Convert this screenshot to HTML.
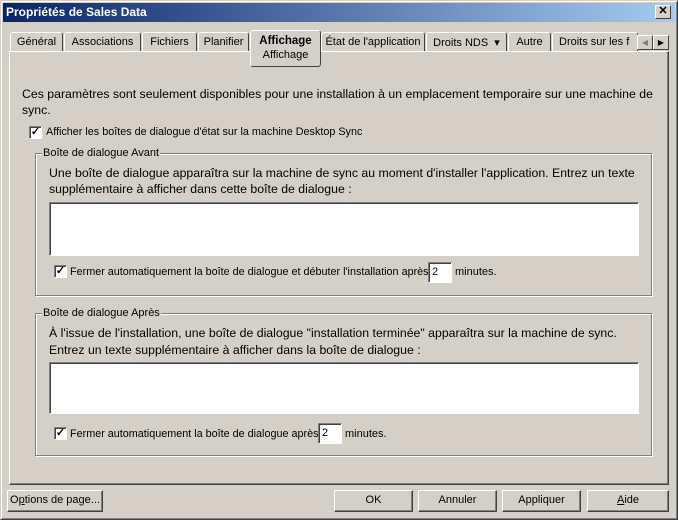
<!DOCTYPE html><html><head><style>
*{box-sizing:border-box;margin:0;padding:0}
body{width:678px;height:520px;background:#d4d0c8;font:11px "Liberation Sans",sans-serif;color:#000;position:relative;overflow:hidden}
.a{position:absolute;white-space:nowrap}
.p{font-size:12.3px}
.s{font-size:10.8px}
.win{position:absolute;left:0;top:0;width:678px;height:520px;border:1px solid;border-color:#d4d0c8 #404040 #404040 #d4d0c8;box-shadow:inset 1px 1px #fff,inset -1px -1px #808080}
.title{left:3px;top:3px;width:672px;height:19px;background:linear-gradient(90deg,#0a246a,#a6caf0);color:#fff;font-weight:bold;font-size:12px;padding:2px 0 0 3px}
.xb{left:655px;top:5px;width:16px;height:14px;background:#d4d0c8;border:1px solid;border-color:#fff #404040 #404040 #fff;font-size:11px;font-weight:bold;text-align:center;line-height:11px}
.tab{position:absolute;top:32px;height:19px;border:1px solid;border-color:#fff #404040 transparent #fff;border-bottom:none;border-radius:3px 3px 0 0;padding-top:3px;text-align:center}
.panel{left:9px;top:51px;width:660px;height:434px;border:1px solid;border-color:#fff #404040 #404040 #fff;box-shadow:inset -1px -1px #808080}
.grp{position:absolute;border:1px solid #808080;box-shadow:1px 1px #fff,inset 1px 1px #fff}
.gl{position:absolute;top:-7px;left:6px;background:#d4d0c8;padding:0 1px}
.cb{position:absolute;width:13px;height:13px;background:#fff;border:1px solid;border-color:#808080 #fff #fff #808080;box-shadow:inset 1px 1px #404040;font-size:11px;line-height:10px;text-align:center;font-weight:bold}
.ta{position:absolute;background:#fff;border:1px solid;border-color:#808080 #fff #fff #808080;box-shadow:inset 1px 1px #404040}
.btn{position:absolute;top:490px;height:22px;border:1px solid;border-color:#fff #404040 #404040 #fff;box-shadow:inset -1px -1px #808080;text-align:center;line-height:19px}
</style></head><body>
<div class="win"></div>
<div class="a title">Propriétés de Sales Data</div>
<div class="a xb">✕</div>
<div class="a panel"></div>
<div class="tab" style="left:10px;width:53px">Général</div>
<div class="tab" style="left:64px;width:77px">Associations</div>
<div class="tab" style="left:142px;width:55px">Fichiers</div>
<div class="tab" style="left:198px;width:51px">Planifier</div>
<div class="tab" style="left:321px;width:104px">État de l'application</div>
<div class="tab" style="left:426px;width:81px">Droits NDS &nbsp;▾</div>
<div class="tab" style="left:508px;width:43px">Autre</div>
<div class="tab" style="left:552px;width:86px;text-align:left;padding-left:6px;overflow:hidden">Droits sur les f</div>
<div class="a" style="left:250px;top:30px;width:71px;height:37px;background:#d4d0c8;border:1px solid;border-color:#fff #404040 #404040 #fff;border-radius:3px;text-align:center;padding-top:4px"><b style="font-size:11.5px">Affichage</b><br><span style="line-height:16px">Affichage</span></div>
<div class="a" style="left:637px;top:35px;width:16px;height:15px;border:1px solid;border-color:#fff #404040 #404040 #fff;color:#808080;font-size:8px;text-align:center;line-height:13px">◀</div>
<div class="a" style="left:653px;top:35px;width:16px;height:15px;border:1px solid;border-color:#fff #404040 #404040 #fff;font-size:8px;text-align:center;line-height:13px">▶</div>
<div class="a p" style="left:22px;top:86px;line-height:16px">Ces paramètres sont seulement disponibles pour une installation à un emplacement temporaire sur une machine de<br>sync.</div>
<div class="cb" style="left:29px;top:126px">✓</div>
<div class="a s" style="left:46px;top:126px">Afficher les boîtes de dialogue d'état sur la machine Desktop Sync</div>
<div class="grp" style="left:35px;top:153px;width:617px;height:143px"><div class="gl">Boîte de dialogue Avant</div></div>
<div class="a p" style="left:49px;top:165px;line-height:16px">Une boîte de dialogue apparaîtra sur la machine de sync au moment d'installer l'application. Entrez un texte<br>supplémentaire à afficher dans cette boîte de dialogue :</div>
<div class="ta" style="left:49px;top:202px;width:590px;height:54px"></div>
<div class="cb" style="left:54px;top:265px">✓</div>
<div class="a s" style="left:70px;top:266px">Fermer automatiquement la boîte de dialogue et débuter l'installation après</div>
<div class="ta" style="left:428px;top:262px;width:24px;height:21px;padding:3px">2</div>
<div class="a" style="left:455px;top:266px">minutes.</div>
<div class="grp" style="left:35px;top:313px;width:617px;height:143px"><div class="gl">Boîte de dialogue Après</div></div>
<div class="a p" style="left:49px;top:325px;line-height:17px">À l'issue de l'installation, une boîte de dialogue "installation terminée" apparaîtra sur la machine de sync.<br>Entrez un texte supplémentaire à afficher dans la boîte de dialogue :</div>
<div class="ta" style="left:49px;top:362px;width:590px;height:52px"></div>
<div class="cb" style="left:54px;top:427px">✓</div>
<div class="a s" style="left:70px;top:428px">Fermer automatiquement la boîte de dialogue après</div>
<div class="ta" style="left:318px;top:423px;width:24px;height:21px;padding:3px">2</div>
<div class="a" style="left:345px;top:428px">minutes.</div>
<div class="btn" style="left:7px;width:96px">O<u>p</u>tions de page...</div>
<div class="btn" style="left:334px;width:79px">OK</div>
<div class="btn" style="left:418px;width:79px">Annuler</div>
<div class="btn" style="left:502px;width:79px">Appliquer</div>
<div class="btn" style="left:587px;width:82px"><u>A</u>ide</div>
</body></html>
